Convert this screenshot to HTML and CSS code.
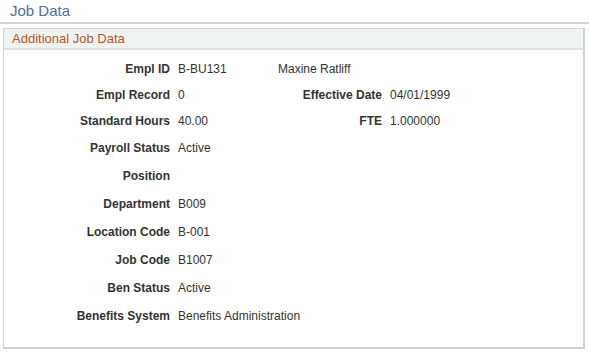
FILE: index.html
```html
<!DOCTYPE html>
<html>
<head>
<meta charset="utf-8">
<link rel="stylesheet" href="styles.css">
</head>
<body>
<div class="page-title">Job Data</div>
<div class="panel">
  <div class="panel-header">Additional Job Data</div>
  <div class="panel-body">
    <div class="row r26">
      <div class="lbl">Empl ID</div><div class="val">B-BU131</div><div class="val span2">Maxine Ratliff</div>
    </div>
    <div class="row r26">
      <div class="lbl">Empl Record</div><div class="val">0</div><div class="lbl">Effective Date</div><div class="val">04/01/1999</div>
    </div>
    <div class="row r26">
      <div class="lbl">Standard Hours</div><div class="val">40.00</div><div class="lbl">FTE</div><div class="val">1.000000</div>
    </div>
    <div class="row r28">
      <div class="lbl">Payroll Status</div><div class="val">Active</div>
    </div>
    <div class="row r28">
      <div class="lbl">Position</div><div class="val"></div>
    </div>
    <div class="row r28">
      <div class="lbl">Department</div><div class="val">B009</div>
    </div>
    <div class="row r28">
      <div class="lbl">Location Code</div><div class="val">B-001</div>
    </div>
    <div class="row r28">
      <div class="lbl">Job Code</div><div class="val">B1007</div>
    </div>
    <div class="row r28">
      <div class="lbl">Ben Status</div><div class="val">Active</div>
    </div>
    <div class="row r28">
      <div class="lbl">Benefits System</div><div class="val wide">Benefits Administration</div>
    </div>
  </div>
</div>
</body>
</html>
```
FILE: styles.css
```css
html, body {
  margin: 0;
  padding: 0;
  background: #ffffff;
  font-family: Arial, "Liberation Sans", sans-serif;
}
.page-title {
  height: 24px;
  box-sizing: border-box;
  padding: 2px 0 0 10px;
  font-size: 15px;
  line-height: 18px;
  color: #4a6ea8;
  border-bottom: 2px solid #d3d4d8;
}
.panel {
  margin: 4px 4px 0 3px;
  height: 321px;
  box-sizing: border-box;
  border: 1px solid #cfd0d4;
  border-top: none;
  border-right-width: 2px;
  border-bottom-width: 2px;
}
.panel-header {
  height: 22px;
  box-sizing: border-box;
  background: #eff3f4;
  border-top: 1px solid #d5d6da;
  border-bottom: 2px solid #dfe0e3;
  padding-left: 8px;
  font-size: 13px;
  line-height: 20px;
  color: #bd561a;
}
.panel-body {
  padding-top: 6px;
}
.row {
  display: grid;
  grid-template-columns: 166px 92px 104px auto;
  column-gap: 8px;
  align-items: center;
  font-size: 12px;
  color: #333333;
}
.r26 { height: 26px; }
.r28 { height: 28px; }
.lbl {
  font-weight: bold;
  text-align: right;
  white-space: nowrap;
}
.val {
  white-space: nowrap;
}
.span2 {
  grid-column: 3 / 5;
}
.wide {
  grid-column: 2 / 5;
}
```
